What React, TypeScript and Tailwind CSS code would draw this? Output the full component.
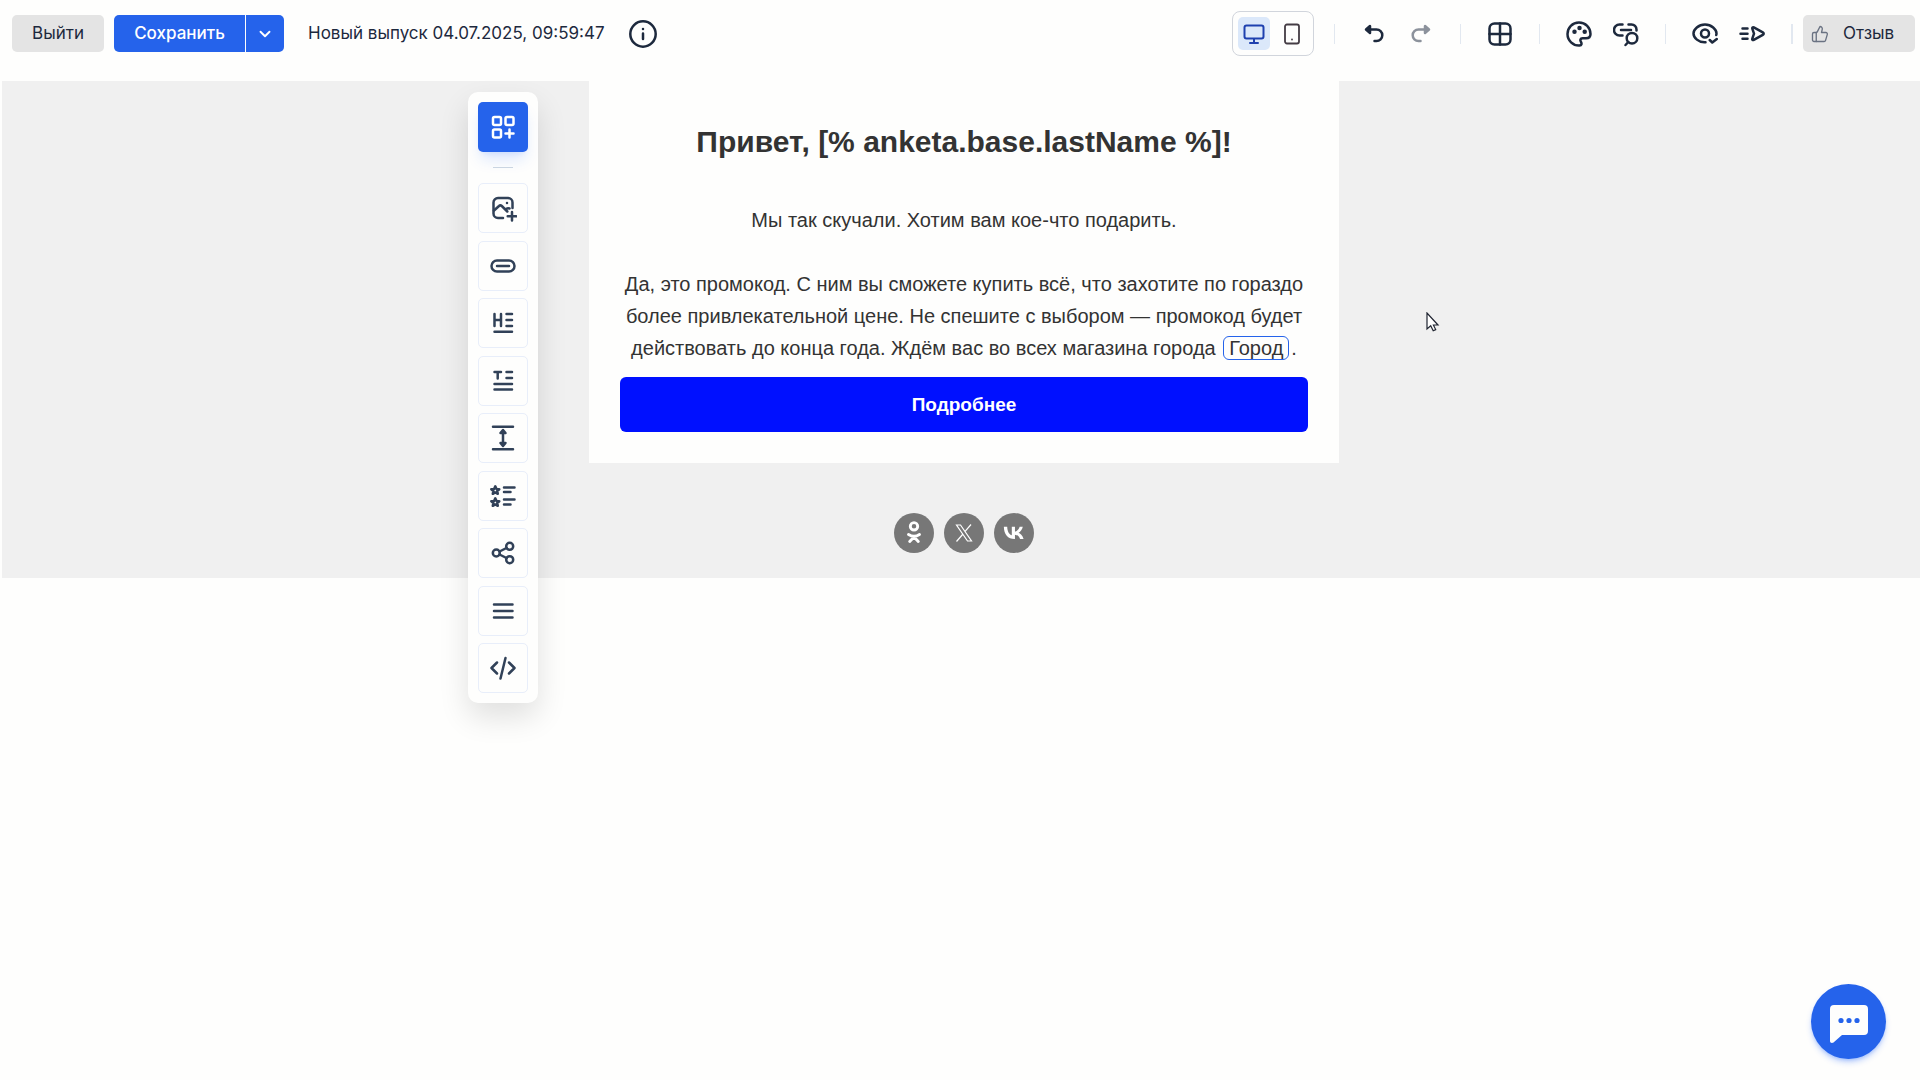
import type { ReactNode } from "react";
import { ChevronDown, ThumbsUp } from "lucide-react";

type IconProps = { size?: number; children: ReactNode };

function Icon({ size = 26, children }: IconProps) {
  return (
    <svg
      width={size}
      height={size}
      viewBox={`0 0 ${size} ${size}`}
      fill="none"
      stroke="currentColor"
      strokeWidth={2.5}
      strokeLinecap="round"
      strokeLinejoin="round"
      aria-hidden="true"
    >
      {children}
    </svg>
  );
}

const star = "M0-4 1.200-1.300 4-1.100 1.900.8 2.500 3.500 0 2.100-2.500 3.500-1.900.8-4-1.100-1.200-1.300z";

const blocks = [
  {
    label: "Изображение",
    icon: (
      <>
        <path d="M14 24H9a4.500 4.500 0 0 1-4.500-4.500V8.500A4.500 4.500 0 0 1 9 4h10a4.500 4.500 0 0 1 4.500 4.500V14" />
        <path d="m5 16.500 5-4.500a2 2 0 0 1 2.800 0l5.500 5.500M16.500 15.500a3.500 3.500 0 0 1 4-1M23 18v8.500M18.700 22.300h8.600" />
        <path d="M18 9v.1" />
      </>
    ),
  },
  {
    label: "Кнопка",
    icon: (
      <>
        <rect x="2.500" y="8.500" width="23" height="11" rx="5.500" />
        <path d="M8 14h12" />
      </>
    ),
  },
  {
    label: "Заголовок",
    icon: <path d="M5.500 5v12M12 5v12M5.500 11H12M17.500 5H23M17.500 11H23M17.500 17H23M5.500 22.700H23" />,
  },
  {
    label: "Текст",
    icon: <path d="M5.500 5h6.500M8.700 5v6.500M17.500 5H23M17.500 11H23M5.500 17H23M5.500 22.500H23" />,
  },
  {
    label: "Отступ",
    icon: (
      <>
        <path d="M4 2.700h20M4 25.300h20M14 8v12" />
        <path d="m11.500 9 2.500-3 2.500 3zM11.500 19l2.500 3 2.500-3z" fill="currentColor" />
      </>
    ),
  },
  {
    label: "Список",
    icon: (
      <>
        <path d={star} transform="translate(6.300 8.300)" />
        <path d={star} transform="translate(6.300 20.300)" />
        <path d="M15 5.500h10.500M15 10h6.500M15 17.500h10.500M15 22.500h6.500" />
      </>
    ),
  },
  {
    label: "Соцсети",
    icon: (
      <>
        <circle cx="7.300" cy="14" r="3.500" />
        <circle cx="20.700" cy="7.300" r="3.500" />
        <circle cx="20.700" cy="20.700" r="3.500" />
        <path d="m10.500 12.500 7-3.500M10.500 15.500l7 3.500" />
      </>
    ),
  },
  {
    label: "Меню",
    icon: <path d="M5 7.500h18.500M5 14h18.500M5 20.500h18.500" />,
  },
  {
    label: "HTML-код",
    icon: <path d="m8 8.500-5.500 5.500L8 19.500M20 8.500l5.500 5.500-5.500 5.500M16.500 4l-5 20.500" />,
  },
];

function ToolGroup({ children }: { children: ReactNode }) {
  return <div className="flex items-center gap-[21px] px-[26px]">{children}</div>;
}

function Separator() {
  return <span className="h-5 w-px bg-slate-200" />;
}

function ToolButton({ label, disabled, children }: { label: string; disabled?: boolean; children: ReactNode }) {
  return (
    <button type="button" aria-label={label} disabled={disabled} className="text-slate-800 disabled:opacity-50">
      <Icon>{children}</Icon>
    </button>
  );
}

function Header() {
  return (
    <header className="flex min-h-[67px] items-center justify-between pl-3 pr-[5px] text-[17px] text-slate-800">
      <div className="flex items-center">
        <button type="button" className="h-[37px] w-[92px] rounded-[5px] bg-[#e4e4e4]">
          Выйти
        </button>
        <div className="ml-2.5 flex gap-px text-white">
          <button type="button" className="h-[37px] w-[131px] rounded-l-[5px] bg-[#2563eb] font-medium">
            Сохранить
          </button>
          <button
            type="button"
            aria-label="Варианты сохранения"
            className="flex h-[37px] w-[38px] items-center justify-center rounded-r-[5px] bg-[#2563eb]"
          >
            <ChevronDown size={18} strokeWidth={2.5} />
          </button>
        </div>
        <span className="ml-6 whitespace-nowrap">Новый выпуск 04.07.2025, 09:59:47</span>
        <button type="button" aria-label="Информация" className="ml-6">
          <Icon size={28}>
            <circle cx="14" cy="14" r="12.700" />
            <path d="M14 13.500v5.500M14 9v.1" />
          </Icon>
        </button>
      </div>

      <div className="flex items-center">
        <div className="flex h-[45px] items-center gap-1.5 rounded-lg border border-gray-300 px-[5px]">
          <button
            type="button"
            aria-label="Компьютер"
            className="flex h-[33px] w-8 items-center justify-center rounded-[5px] bg-[#dbe8fa] text-[#1e40af]"
          >
            <Icon size={24}>
              <g strokeWidth="2">
                <rect x="2.500" y="3.500" width="19" height="13" rx="2" />
                <path d="M12 17v4M8 21h8" />
              </g>
            </Icon>
          </button>
          <button type="button" aria-label="Телефон" className="flex h-[33px] w-8 items-center justify-center text-[#443c44]">
            <Icon size={24}>
              <g strokeWidth="1.800">
                <rect x="5" y="2.500" width="14" height="19" rx="2" />
                <path d="M12 17.500v.1" />
              </g>
            </Icon>
          </button>
        </div>
        <span className="ml-5 h-5 w-px bg-slate-200" />
        <ToolGroup>
          <ToolButton label="Отменить">
            <path d="M9 8.500h6.500a5.800 5.800 0 0 1 0 11.600h-2" />
            <path d="M5 8.500 9 5v7z" fill="currentColor" />
          </ToolButton>
          <ToolButton label="Повторить" disabled>
            <path d="M17 8.500h-6.500a5.800 5.800 0 0 0 0 11.600h2" />
            <path d="M21 8.500 17 5v7z" fill="currentColor" />
          </ToolButton>
        </ToolGroup>
        <Separator />
        <ToolGroup>
          <ToolButton label="Сетка">
            <rect x="2.500" y="2.500" width="21" height="21" rx="5" />
            <path d="M13 2.500v21M2.500 13h21" />
          </ToolButton>
        </ToolGroup>
        <Separator />
        <ToolGroup>
          <ToolButton label="Оформление">
            <path d="M13 1.500C6.500 1.500 1.500 6.500 1.500 13S7 24.800 13.500 24.500c2.200-.2 2.500-2 1.500-3.500-1.200-1.800-.8-3.700 1.500-3.700h3.500c3 0 4.500-1.800 4.500-4.300 0-6.500-5-11.500-11.500-11.500z" />
            <g strokeWidth="4.500">
              <path d="M8.500 10.700v.1M13.500 7v.1M18.700 10.700v.1" />
            </g>
          </ToolButton>
          <ToolButton label="Проверить ссылки">
            <path d="M9.500 3.500h-3a5 5 0 0 0 0 11h3M15.500 3.500h3a5 5 0 0 1 5 5v1M8 9h10" />
            <circle cx="19" cy="17.200" r="5.300" />
            <path d="m15.300 21-2.800 3" />
          </ToolButton>
        </ToolGroup>
        <Separator />
        <ToolGroup>
          <ToolButton label="Предпросмотр">
            <path d="M13.500 21.300C6.500 21.800 1.500 16.500 1.500 12.500S6.500 3.500 13 3.500s11.500 5 11.500 9c0 .5-.1 1-.3 1.500" />
            <circle cx="13" cy="12.500" r="4" />
            <path d="m17.700 19 2.600 2.500 4.500-3.500" />
          </ToolButton>
          <ToolButton label="Отправить тест">
            <path d="M1.500 12.700h7M3.500 7.500h5M3.500 17.800h5M15 12.700l-1.700-5c-.4-1.300.5-1.800 1.500-1.300l9 5c1.200.7 1.200 1.800 0 2.500l-9 5c-1 .5-1.900 0-1.500-1.300z" />
          </ToolButton>
        </ToolGroup>
        <span className="h-5 w-0.5 bg-slate-200" />
        <button type="button" className="ml-2.5 flex h-[37px] w-28 items-center rounded-[5px] bg-[#e4e4e4] pl-2">
          <ThumbsUp size={18} strokeWidth={1.8} className="mr-3.5 text-gray-500" />
          Отзыв
        </button>
      </div>
    </header>
  );
}

function BlockPalette() {
  return (
    <aside className="absolute right-full top-[11px] mr-[51px] flex w-[70px] flex-col items-center rounded-[10px] bg-[#fefefd] py-2.5 shadow-[0_14px_30px_rgba(0,0,0,0.12)]">
      <button
        type="button"
        aria-label="Добавить блок"
        className="flex size-[50px] items-center justify-center rounded-[5px] bg-[#2563eb] text-white shadow-lg shadow-blue-600/15"
      >
        <Icon size={28}>
          <rect x="4" y="4" width="8" height="8" rx="1.500" />
          <rect x="16.500" y="4" width="8" height="8" rx="1.500" />
          <rect x="4" y="16.500" width="8" height="8" rx="1.500" />
          <path d="M20.500 16.500v8M16.500 20.500h8" />
        </Icon>
      </button>
      <hr className="my-[15px] w-5 border-slate-300" />
      <div className="flex h-[510px] flex-col justify-between">
        {blocks.map((block) => (
          <button
            key={block.label}
            type="button"
            aria-label={block.label}
            className="flex size-[50px] items-center justify-center rounded-[5px] border border-[#e8eefa] text-slate-700"
          >
            <Icon size={28}>{block.icon}</Icon>
          </button>
        ))}
      </div>
    </aside>
  );
}

function SocialLink({ label, children }: { label: string; children: ReactNode }) {
  return (
    <a href="#" aria-label={label} className="flex size-10 items-center justify-center rounded-full bg-[#777777] text-white">
      {children}
    </a>
  );
}

export default function App() {
  return (
    <div className="min-h-screen bg-[#fefefd] pb-10 font-['Inter',sans-serif]">
      <Header />

      <main className="relative ml-0.5 mt-3.5 bg-[#f0f0f0] pb-[25px] pl-1.5 font-['Liberation_Sans',Arial,sans-serif]">
        <div className="relative mx-auto w-[750px]">
          <BlockPalette />
          <article className="bg-[#fefefd] px-[31px] pb-[31px] pt-[38px] text-center text-xl leading-8 text-[#333333]">
            <h1 className="text-[30px] font-bold leading-[46px]">Привет, [% anketa.base.lastName %]!</h1>
            <p className="mt-[39px]">Мы так скучали. Хотим вам кое-что подарить.</p>
            <p className="mt-8">
              Да, это промокод. С ним вы сможете купить всё, что захотите по гораздо более привлекательной цене. Не
              спешите с выбором — промокод будет действовать до конца года. Ждём вас во всех магазина города{" "}
              <span className="mx-0.5 rounded-md border border-[#2563eb] px-[5px]">Город</span>.
            </p>
            <a
              href="#"
              className="mt-[13px] flex h-[55px] items-center justify-center rounded-md bg-[#0010ff] text-[19px] font-bold text-white"
            >
              Подробнее
            </a>
          </article>

          <div className="mt-[50px] flex justify-center gap-2.5">
            <SocialLink label="Одноклассники">
              <Icon size={40}>
                <g strokeWidth="2.900">
                  <circle cx="20" cy="13.300" r="3.700" />
                  <path d="M14.500 21.500q5.500 3.500 11 0M20 24l-4.300 4.500M20 24l4.300 4.500" />
                </g>
              </Icon>
            </SocialLink>
            <SocialLink label="X">
              <svg width="18" height="18" viewBox="0 0 18 18" fill="none" stroke="currentColor" strokeWidth="1.200" aria-hidden="true">
                <path d="M1.500 1h4l11 16h-4zM16 .5 9.700 7.800M1.500 17.500 8 10" />
              </svg>
            </SocialLink>
            <SocialLink label="ВКонтакте">
              <svg width="24" height="24" viewBox="0 0 24 24" fill="currentColor" aria-hidden="true">
                <path d="M12.600 18C5.900 18 2 13.400 1.850 5.750h3.360c.1 5.600 2.600 8 4.600 8.500v-8.500h3.150v4.850c1.950-.2 4-2.400 4.700-4.850h3.150c-.5 3-2.700 5.200-4.250 6.100 1.550.7 4.050 2.600 5 6.150h-3.500c-.75-2.300-2.600-4.100-5.100-4.350V18z" />
              </svg>
            </SocialLink>
          </div>
        </div>

        <svg width="14" height="20" viewBox="0 0 14 20" className="absolute left-[1424px] top-[231px]" aria-hidden="true">
          <path d="M1 1v16l3.700-3.200 2.500 5 2.500-1.200-2.300-4.600H12z" fill="#ffffff" stroke="#1f2430" strokeWidth="1.200" />
        </svg>
      </main>

      <button
        type="button"
        aria-label="Открыть чат"
        className="fixed bottom-[21px] right-[34px] flex size-[75px] items-center justify-center rounded-full bg-[#2563eb] shadow-md shadow-blue-600/30"
      >
        <svg width="38" height="38" viewBox="0 0 38 38" className="mt-1" aria-hidden="true">
          <path
            d="M4 0h30a4 4 0 0 1 4 4v22a4 4 0 0 1-4 4H12l-8.500 7.500C2 38.500 0 38 0 36V4a4 4 0 0 1 4-4z"
            fill="#fefefd"
          />
          <g fill="#2563eb">
            <circle cx="11" cy="15.500" r="2.600" />
            <circle cx="19" cy="15.500" r="2.600" />
            <circle cx="27" cy="15.500" r="2.600" />
          </g>
        </svg>
      </button>
    </div>
  );
}
